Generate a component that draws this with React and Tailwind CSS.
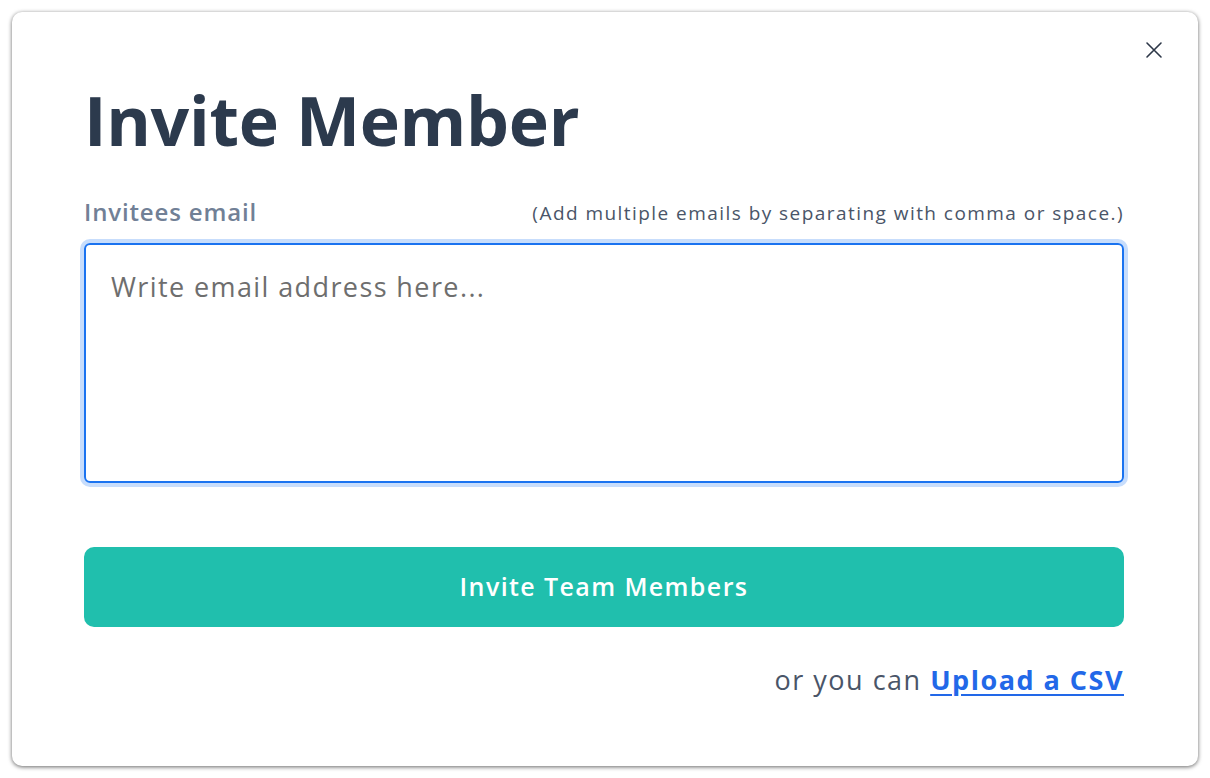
import React from 'react';

function CloseIcon() {
  return (
    <svg width="18" height="18" viewBox="0 0 18 18" fill="none" stroke="#2d3748" strokeWidth="1.6" strokeLinecap="round">
      <path d="M2 2 L16 16 M16 2 L2 16" />
    </svg>
  );
}

export default function App() {
  return (
    <div className="w-full h-[778px] bg-white p-3" style={{ fontFamily: '"Open Sans", "Liberation Sans", sans-serif' }}>
      <div className="relative h-full bg-white rounded-[10px] shadow-[0_1px_4px_rgba(0,0,0,0.6)] pl-[72px] pr-[74px] pt-[74px]">
        <button className="absolute right-[35px] top-[29px] p-0">
          <CloseIcon />
        </button>

        {/* Heading */}
        <h1 className="text-[68px] leading-[68px] font-bold text-[#2c3a4d] tracking-[-0.3px]">Invite Member</h1>

        {/* Email field */}
        <div className="mt-[42px] flex items-end justify-between">
          <label className="text-[24px] leading-[32px] font-semibold text-[#718096] tracking-[0.85px]">Invitees email</label>
          <span className="text-[19px] leading-[28px] text-[#4a5568] tracking-[1.45px] pb-[1px]">(Add multiple emails by separating with comma or space.)</span>
        </div>
        <textarea
          className="mt-[15px] block w-full h-[240px] resize-none rounded-[6px] border-2 border-[#1a73f0] ring-4 ring-[#c7ddfc] outline-none px-[25px] pt-[22px] text-[27px] tracking-[1.4px] text-[#333] placeholder:text-[#6e6e6e]"
          placeholder="Write email address here..."
        />

        <button className="mt-[64px] w-full h-[80px] rounded-[10px] bg-[#20bfad] text-white text-[25px] tracking-[1.4px] font-semibold">
          Invite Team Members
        </button>

        <p className="mt-[33px] text-right text-[27px] tracking-[1.5px] text-[#4a5568]">
          or you can{' '}
          <a href="#" className="font-bold text-[#2268e8] underline underline-offset-[4px]">Upload a CSV</a>
        </p>
      </div>
    </div>
  );
}
